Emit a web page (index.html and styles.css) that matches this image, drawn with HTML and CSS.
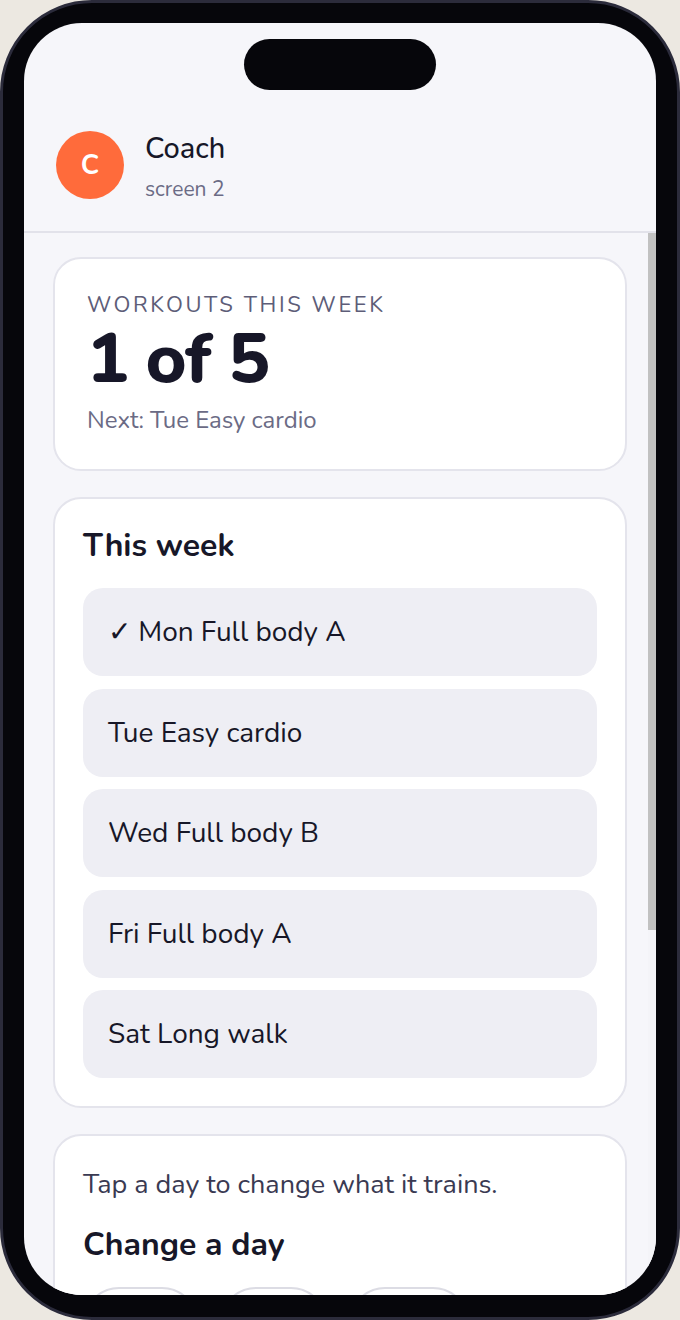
FILE: index.html
```html
<!DOCTYPE html>
<html lang="en">
<head>
  <meta charset="UTF-8" />
  <meta name="viewport" content="width=device-width, initial-scale=1.0"/>
  <title>Coach</title>
  <link rel="stylesheet" href="styles.css">
</head>
<body>

  <div class="phone">
    <div class="screen">
      <div class="island"></div>

      <header class="top">
        <div class="avatar">C</div>
        <div class="who">
          <div class="who-name">Coach</div>
          <div class="who-sub">screen 2</div>
        </div>
      </header>

      <div class="body-wrap">
        <main class="scroll">

          <section class="card summary">
            <div class="label">Workouts this week</div>
            <div class="big">1 of 5</div>
            <div class="next">Next: Tue Easy cardio</div>
          </section>

          <section class="card">
            <h2>This week</h2>
            <ul class="days">
              <li>✓ Mon Full body A</li>
              <li>Tue Easy cardio</li>
              <li>Wed Full body B</li>
              <li>Fri Full body A</li>
              <li>Sat Long walk</li>
            </ul>
          </section>

          <section class="card">
            <p class="hint">Tap a day to change what it trains.</p>
            <h2>Change a day</h2>
            <div class="chips">
              <button class="chip">Mon</button>
              <button class="chip">Tue</button>
              <button class="chip">Wed</button>
              <button class="chip">Fri</button>
              <button class="chip">Sat</button>
            </div>
          </section>

        </main>

        <!-- scroll indicator -->
        <div class="scrollbar">
          <div class="thumb"></div>
        </div>
      </div>
    </div>
  </div>

</body>
</html>
```

FILE: styles.css
```css
body {
  margin: 0;
  background-color: #ece8e1;
  font-family: 'Nunito', 'Lato', 'Noto Sans', sans-serif;
  color: #171728;
}

.phone {
  width: 680px;
  height: 1320px;
  box-sizing: border-box;
  padding: 20px 21px 22px;
  border: 3px solid #2b2b3b;
  border-radius: 92px;
  background-color: #06060b;
}

.screen {
  position: relative;
  height: 100%;
  border-radius: 58px;
  overflow: hidden;
  background-color: #f6f6fa;
  display: flex;
  flex-direction: column;
}

.island {
  position: absolute;
  top: 16px;
  left: 220px;
  width: 192px;
  height: 51px;
  border-radius: 26px;
  background-color: #06060b;
}

/* header */
.top {
  display: flex;
  align-items: center;
  gap: 21px;
  height: 68px;
  padding: 108px 32px 32px;
  border-bottom: 2px solid #e2e2ea;
  flex-shrink: 0;
}

.avatar {
  width: 68px;
  height: 68px;
  border-radius: 50%;
  background-color: #ff6b3b;
  color: white;
  font-weight: bold;
  font-size: 27px;
  display: flex;
  align-items: center;
  justify-content: center;
}

.who-name {
  font-size: 29px;
  line-height: 36px;
  font-weight: 500;
}

.who-sub {
  font-size: 21px;
  line-height: 20px;
  margin-top: 12px;
  color: #6b6b85;
}

/* scroll area */
.body-wrap {
  flex: 1;
  display: flex;
  min-height: 0;
}

.scroll {
  flex: 1;
  overflow: hidden;
  padding: 24px 21px 40px 29px;
  display: flex;
  flex-direction: column;
  gap: 26px;
}

.scrollbar {
  width: 8px;
  flex-shrink: 0;
  background-color: #f4f4f8;
}

.thumb {
  height: 697px;
  background-color: #c1c1c1;
}

.card {
  background-color: white;
  border: 2px solid #e4e4ec;
  border-radius: 28px;
  padding: 28px;
  flex-shrink: 0;
}

.summary {
  padding: 32px 32px 34px;
}

.label {
  font-size: 22px;
  letter-spacing: 2.6px;
  text-transform: uppercase;
  color: #5d5d78;
  line-height: 28px;
}

.big {
  font-size: 70px;
  font-weight: 800;
  letter-spacing: -1.5px;
  line-height: 80px;
}

.next {
  font-size: 24px;
  color: #6b6b85;
  line-height: 30px;
  margin-top: 6px;
}

h2 {
  font-size: 32px;
  font-weight: bold;
  margin: 0;
  line-height: 38px;
}

.days {
  list-style: none;
  padding: 0;
  margin: 23px 0 0;
  display: flex;
  flex-direction: column;
  gap: 12.5px;
}

.days li {
  background-color: #eeeef4;
  border-radius: 20px;
  height: 88px;
  padding: 0 25px;
  display: flex;
  align-items: center;
  font-size: 28px;
}

.hint {
  font-size: 27px;
  color: #3a3a52;
  margin: 5px 0 25px;
  line-height: 32px;
}

.chips {
  display: flex;
  flex-wrap: wrap;
  gap: 22px;
  max-width: 480px;
  margin-top: 23px;
}

.chip {
  font-family: inherit;
  font-size: 26px;
  color: #171728;
  background-color: white;
  border: 2px solid #dcdce4;
  border-radius: 36px;
  height: 72px;
  padding: 0 30px;
}
```
